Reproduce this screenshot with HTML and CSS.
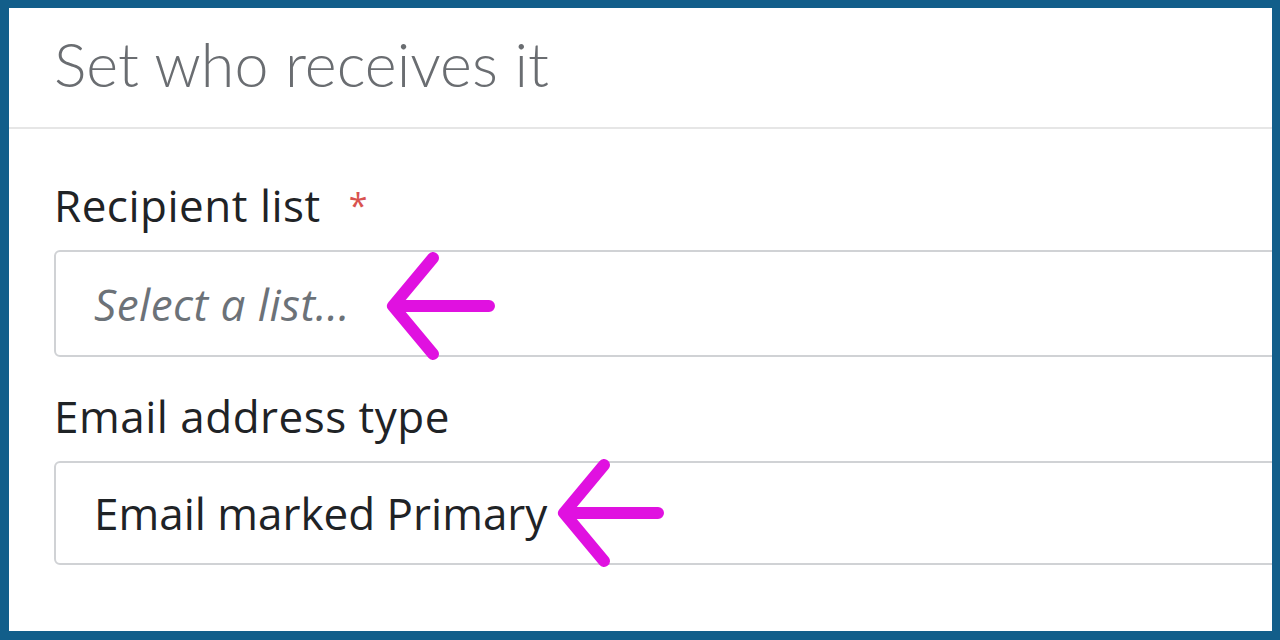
FILE: index.html
```html
<!DOCTYPE html>
<html>
<head>
<meta charset="utf-8">
<link rel="stylesheet" href="styles.css">
</head>
<body>
<div class="frame">
  <div class="card">
    <div class="card-header">
      <h1 class="title">Set who receives it</h1>
    </div>
    <div class="card-body">
      <div class="field field-1">
        <label class="label">Recipient list <span class="req">*</span></label>
        <div class="input input-1 placeholder">Select a list...</div>
      </div>
      <div class="field field-2">
        <label class="label">Email address type</label>
        <div class="input input-2">Email marked Primary</div>
      </div>
    </div>
    <svg class="arrow arrow-1" width="120" height="120" viewBox="0 0 120 120">
      <path d="M48 6 L8 54 L48 102 M8 54 L104 54" fill="none" stroke="#e011e0" stroke-width="12" stroke-linecap="round" stroke-linejoin="round"/>
    </svg>
    <svg class="arrow arrow-2" width="120" height="120" viewBox="0 0 120 120">
      <path d="M48 6 L8 54 L48 102 M8 54 L102 54" fill="none" stroke="#e011e0" stroke-width="12" stroke-linecap="round" stroke-linejoin="round"/>
    </svg>
  </div>
</div>
</body>
</html>
```
FILE: styles.css
```css
html, body {
  margin: 0;
  padding: 0;
}
body {
  width: 1280px;
  height: 640px;
  background: #125e8a;
  font-family: "Open Sans", sans-serif;
}
.frame {
  box-sizing: border-box;
  width: 1280px;
  height: 640px;
  padding: 8px 8px 9px 9px;
}
.card {
  position: relative;
  background: #ffffff;
  height: 100%;
  overflow: hidden;
}
.card-header {
  height: 121px;
  border-bottom: 2px solid #e6e6e6;
  padding-left: 45px;
  padding-bottom: 8px;
  box-sizing: border-box;
  display: flex;
  align-items: center;
}
.title {
  margin: 0;
  font-family: Lato, sans-serif;
  font-weight: 300;
  font-size: 61px;
  color: #6a6d71;
}
.card-body {
  padding: 52px 0 0 45px;
  display: flex;
  flex-direction: column;
  gap: 35px;
}
.field {
  display: flex;
  flex-direction: column;
  gap: 21px;
}
.label {
  font-size: 44px;
  letter-spacing: 0.5px;
  color: #1f2326;
  line-height: 48px;
}
.req {
  color: #d9534f;
  margin-left: 16px;
  font-size: 34px;
  vertical-align: top;
}
.input {
  box-sizing: border-box;
  width: calc(100% + 40px);
  height: 107px;
  border: 2px solid #d0d2d5;
  border-radius: 6px;
  padding-left: 38px;
  display: flex;
  align-items: center;
  font-size: 44px;
  color: #1f2326;
}
.input-2 {
  height: 104px;
}
.input.placeholder {
  font-style: italic;
  letter-spacing: 0.5px;
  color: #6c7278;
}
.arrow {
  position: absolute;
}
.arrow-1 {
  left: 376px;
  top: 244px;
}
.arrow-2 {
  left: 547px;
  top: 451px;
}
```
